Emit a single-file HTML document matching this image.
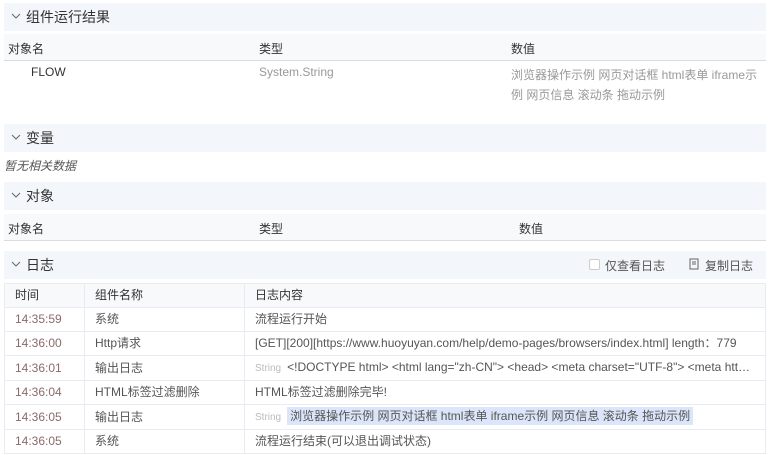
<!DOCTYPE html>
<html><head><meta charset="utf-8"><style>
*{margin:0;padding:0;box-sizing:border-box}
body{width:769px;height:455px;background:#fff;font-family:"Liberation Sans","Noto Sans CJK SC",sans-serif;font-size:12px;color:#333;position:relative;overflow:hidden}
.a{position:absolute;white-space:nowrap}
.sec{position:absolute;left:4px;width:762px;height:28px;background:#f3f6fa;font-size:14px;line-height:28px;padding-left:22px;color:#333}
.sec svg{position:absolute;left:7px;top:10px}
.th{position:absolute;left:4px;width:762px;height:27px;background:#f8f9fa;border-bottom:1px solid #dcdcdc}
.g{color:#999}
table{position:absolute;left:4px;top:283px;width:762px;border-collapse:collapse}
td{border:1px solid #e8ecf2;height:24px;padding:0 10px;line-height:23px;white-space:nowrap;overflow:hidden;color:#555}
tr:first-child td{background:#f8f9fa;color:#333}
td.t{color:#8a6a6a}
.s{color:#bbb;font-size:10px;margin-right:6px}
</style></head><body>
<div class="sec" style="top:3px"><svg width="10" height="6"><path d="M1 1l4 4 4-4" fill="none" stroke="#666"/></svg>组件运行结果</div>
<div class="th" style="top:34px"></div>
<div class="a" style="left:8px;top:40px">对象名</div>
<div class="a" style="left:259px;top:40px">类型</div>
<div class="a" style="left:511px;top:40px">数值</div>
<div class="a" style="left:31px;top:65px">FLOW</div>
<div class="a g" style="left:259px;top:65px">System.String</div>
<div class="a g" style="left:511px;top:65px;line-height:20px">浏览器操作示例 网页对话框 html表单 iframe示<br>例 网页信息 滚动条 拖动示例</div>
<div class="sec" style="top:124px"><svg width="10" height="6"><path d="M1 1l4 4 4-4" fill="none" stroke="#666"/></svg>变量</div>
<div class="a" style="left:4px;top:157px;font-style:italic;color:#555">暂无相关数据</div>
<div class="sec" style="top:182px"><svg width="10" height="6"><path d="M1 1l4 4 4-4" fill="none" stroke="#666"/></svg>对象</div>
<div class="th" style="top:214px"></div>
<div class="a" style="left:8px;top:220px">对象名</div>
<div class="a" style="left:259px;top:220px">类型</div>
<div class="a" style="left:519px;top:220px">数值</div>
<div class="sec" style="top:251px"><svg width="10" height="6"><path d="M1 1l4 4 4-4" fill="none" stroke="#666"/></svg>日志</div>
<div class="a" style="left:589px;top:259px;width:11px;height:11px;border:1px solid #ccc;border-radius:2px;background:#fff"></div>
<div class="a" style="left:605px;top:257px;color:#555">仅查看日志</div>
<svg class="a" style="left:689px;top:258px" width="11" height="12"><rect x="1" y="1" width="8" height="10" fill="none" stroke="#666"/><path d="M3 4h4M3 6h4" stroke="#666"/></svg>
<div class="a" style="left:705px;top:257px;color:#555">复制日志</div>
<table>
<colgroup><col style="width:80px"><col style="width:160px"><col></colgroup>
<tr><td>时间</td><td>组件名称</td><td>日志内容</td></tr>
<tr><td class="t">14:35:59</td><td>系统</td><td>流程运行开始</td></tr>
<tr><td class="t">14:36:00</td><td>Http请求</td><td>[GET][200][https://www.huoyuyan.com/help/demo-pages/browsers/index.html] length：779</td></tr>
<tr><td class="t">14:36:01</td><td>输出日志</td><td><span class="s">String</span>&lt;!DOCTYPE html&gt; &lt;html lang="zh-CN"&gt; &lt;head&gt; &lt;meta charset="UTF-8"&gt; &lt;meta htt…</td></tr>
<tr><td class="t">14:36:04</td><td>HTML标签过滤删除</td><td>HTML标签过滤删除完毕!</td></tr>
<tr><td class="t">14:36:05</td><td>输出日志</td><td><span class="s">String</span><span style="background:#dce6fa;padding:2px 3px">浏览器操作示例 网页对话框 html表单 iframe示例 网页信息 滚动条 拖动示例</span></td></tr>
<tr><td class="t">14:36:05</td><td>系统</td><td>流程运行结束(可以退出调试状态)</td></tr>
</table>
</body></html>
